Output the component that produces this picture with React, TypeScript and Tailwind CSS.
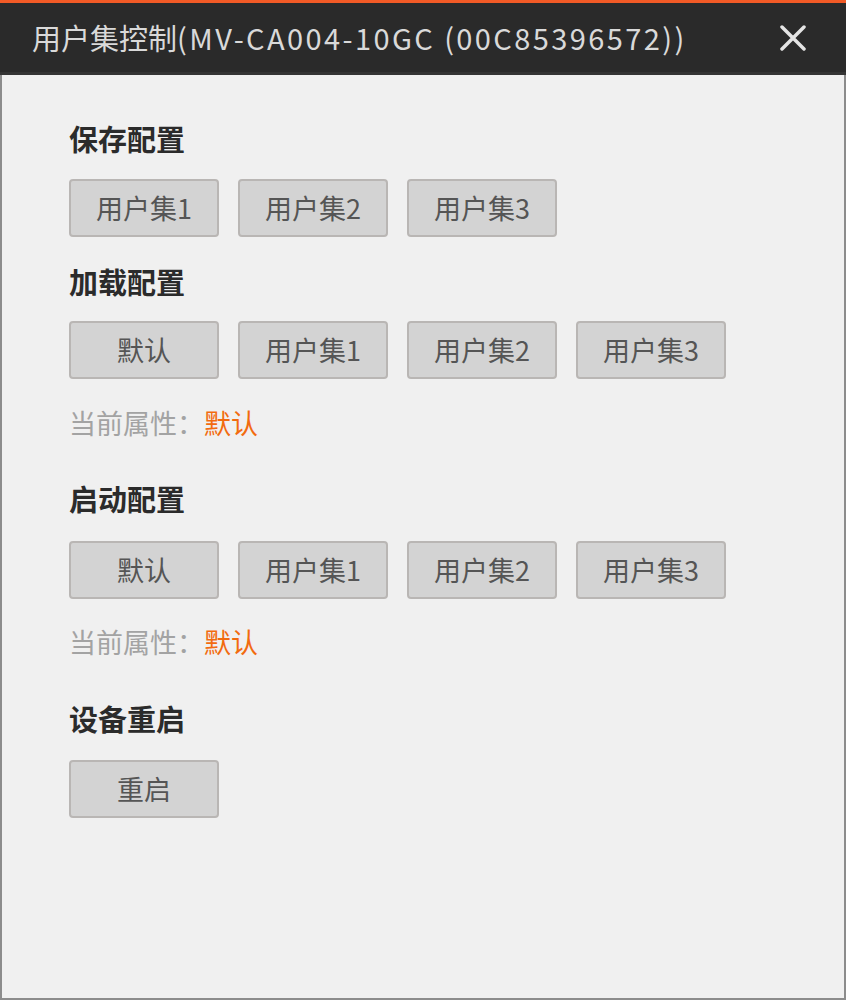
import React from "react";

const font = { fontFamily: '"Noto Sans CJK SC", "Noto Sans", sans-serif' };

function Btn({ label }: { label: string }) {
  return (
    <button className="flex h-[58px] w-[150px] items-center justify-center rounded-[4px] border-2 border-[#b9b6b4] bg-[#d3d3d3] text-[27px] text-[#555555]">
      {label}
    </button>
  );
}

function Heading({ children }: { children: React.ReactNode }) {
  return <div className="h-[40px] text-[29px] font-bold leading-[40px] text-[#2b2b2b]">{children}</div>;
}

function Current() {
  return (
    <div className="h-[40px] text-[27px] leading-[40px] text-[#a3a3a3]">
      当前属性：<span className="text-[#f26b0f]">默认</span>
    </div>
  );
}

export default function App() {
  const users = ["用户集1", "用户集2", "用户集3"];
  return (
    <div className="flex h-[1000px] w-[846px] flex-col bg-[#f0f0f0]" style={font}>
      <div className="h-[3px] bg-[#f25a26]" />
      <div className="flex h-[72px] items-center justify-between border-b-[3px] border-[#343434] bg-[#2a2a2a] pl-[32px] pr-[40px]">
        <span className="text-[29px] leading-none text-[#d9d9d9]">
          用户集控制<span className="tracking-[2.4px]">(MV-CA004-10GC (00C85396572))</span>
        </span>
        <svg width="26" height="26" viewBox="0 0 26 26" className="mt-[1px]">
          <path d="M2 2 L24 24 M24 2 L2 24" stroke="#e4e4e4" strokeWidth="3.5" strokeLinecap="round" />
        </svg>
      </div>
      <div className="flex flex-1 flex-col border-x-2 border-b-2 border-[#8c8c8c] pl-[67px] pt-[43px]">
        <Heading>保存配置</Heading>
        <div className="mt-[21px] flex gap-[19px]">
          {users.map((u) => (
            <Btn key={u} label={u} />
          ))}
        </div>
        <div className="mt-[24px]">
          <Heading>加载配置</Heading>
        </div>
        <div className="mt-[20px] flex gap-[19px]">
          <Btn label="默认" />
          {users.map((u) => (
            <Btn key={u} label={u} />
          ))}
        </div>
        <div className="mt-[24px]">
          <Current />
        </div>
        <div className="mt-[35px]">
          <Heading>启动配置</Heading>
        </div>
        <div className="mt-[23px] flex gap-[19px]">
          <Btn label="默认" />
          {users.map((u) => (
            <Btn key={u} label={u} />
          ))}
        </div>
        <div className="mt-[23px]">
          <Current />
        </div>
        <div className="mt-[36px]">
          <Heading>设备重启</Heading>
        </div>
        <div className="mt-[22px] flex gap-[19px]">
          <Btn label="重启" />
        </div>
      </div>
    </div>
  );
}
